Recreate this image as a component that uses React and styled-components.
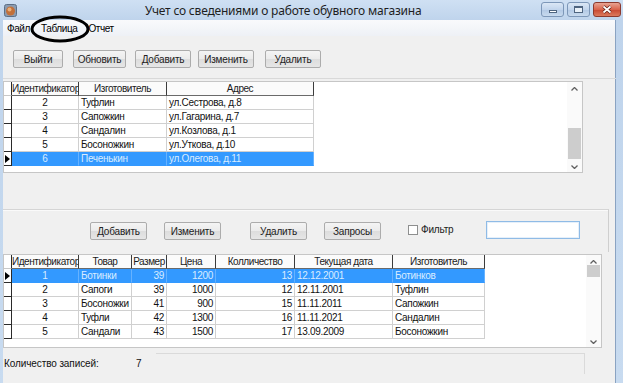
import React from 'react'
import styled, { createGlobalStyle } from 'styled-components'

const GlobalStyle = createGlobalStyle`
  html, body { margin: 0; padding: 0; background: #f0f0f0; }
  body { font-family: "Liberation Sans", Arial, sans-serif; }
  * { box-sizing: border-box; }
`

const suppliers = [
  { id: 2, name: 'Туфлин', addr: 'ул.Сестрова, д.8' },
  { id: 3, name: 'Сапожкин', addr: 'ул.Гагарина, д.7' },
  { id: 4, name: 'Сандалин', addr: 'ул.Козлова, д.1' },
  { id: 5, name: 'Босоножкин', addr: 'ул.Уткова, д.10' },
  { id: 6, name: 'Печенькин', addr: 'ул.Олегова, д.11' },
]

const goods = [
  [1, 'Ботинки', 39, 1200, 13, '12.12.2001', 'Ботинков'],
  [2, 'Сапоги', 39, 1000, 12, '12.11.2001', 'Туфлин'],
  [3, 'Босоножки', 41, 900, 15, '11.11.2011', 'Сапожкин'],
  [4, 'Туфли', 42, 1300, 16, '11.11.2021', 'Сандалин'],
  [5, 'Сандали', 43, 1500, 17, '13.09.2009', 'Босоножкин'],
]

const supplierCols = [
  { title: 'Идентификатор', width: 67, align: 'center' },
  { title: 'Изготовитель', width: 88, align: 'left' },
  { title: 'Адрес', width: 147, align: 'left' },
]

const goodsCols = [
  { title: 'Идентификатор', width: 67, align: 'center' },
  { title: 'Товар', width: 53, align: 'left' },
  { title: 'Размер', width: 35, align: 'right' },
  { title: 'Цена', width: 49, align: 'right' },
  { title: 'Колличество', width: 79, align: 'right' },
  { title: 'Текущая дата', width: 98, align: 'left' },
  { title: 'Изготовитель', width: 92, align: 'left' },
]

function DataGrid({ columns, rows, selected, width, height, thumbTop, thumbHeight }) {
  return (
    <GridBox $w={width} $h={height}>
      <Table>
        <Row>
          <Indicator $header />
          {columns.map((c) => (
            <HeadCell key={c.title} $w={c.width}>{c.title}</HeadCell>
          ))}
        </Row>
        {rows.map((r, i) => (
          <Row key={i}>
            <Indicator>{i === selected && <Arrow />}</Indicator>
            {columns.map((c, j) => (
              <Cell key={j} $w={c.width} $align={c.align} $sel={i === selected}>
                {r[j]}
              </Cell>
            ))}
          </Row>
        ))}
      </Table>
      <ScrollBar>
        <Chevron viewBox="0 0 7 4"><path d="M0.5 3.5 L3.5 0.5 L6.5 3.5" /></Chevron>
        <Track>
          <Thumb style={{ marginTop: thumbTop, height: thumbHeight }} />
        </Track>
        <Chevron viewBox="0 0 7 4"><path d="M0.5 0.5 L3.5 3.5 L6.5 0.5" /></Chevron>
      </ScrollBar>
    </GridBox>
  )
}

export default function App() {
  return (
    <>
      <GlobalStyle />
      <Window>
        <TitleBar>
          <AppIcon viewBox="0 0 13 13">
            <rect x="0.5" y="0.5" width="12" height="12" rx="2" fill="#8a9bb0" stroke="#5c6f86" />
            <circle cx="6.5" cy="7" r="4.5" fill="#c2703a" />
            <circle cx="5.5" cy="5.5" r="2" fill="#e8b07a" />
          </AppIcon>
          <Title>Учет со сведениями о работе обувного магазина</Title>
          <Caption>
            <CapButton $w={23}><MinGlyph /></CapButton>
            <CapButton $w={23}><MaxGlyph /></CapButton>
            <CloseButton>
              <svg width="10" height="9" viewBox="0 0 10 9">
                <path d="M1.5 1.5 L8.5 7.5 M8.5 1.5 L1.5 7.5" stroke="#5a1a10" strokeWidth="3.2" />
                <path d="M1.5 1.5 L8.5 7.5 M8.5 1.5 L1.5 7.5" stroke="#fff" strokeWidth="1.8" />
              </svg>
            </CloseButton>
          </Caption>
        </TitleBar>

        <Frame>
          <Content>
            <MenuBar>
              <MenuItem>Файл</MenuItem>
              <MenuItem>Таблица</MenuItem>
              <MenuItem>Отчет</MenuItem>
            </MenuBar>

            <Toolbar>
              <Button $w={50}>Выйти</Button>
              <Button $w={53} $ml={10}>Обновить</Button>
              <Button $w={56} $ml={9}>Добавить</Button>
              <Button $w={56} $ml={7}>Изменить</Button>
              <Button $w={56} $ml={11}>Удалить</Button>
            </Toolbar>

            <DataGrid
              columns={supplierCols}
              rows={suppliers.map((s) => [s.id, s.name, s.addr])}
              selected={4}
              width={580}
              height={92}
              thumbTop={37}
              thumbHeight={31}
            />

            <Spacer $h={36} />

            <ActionPanel>
              <Button $w={57}>Добавить</Button>
              <Button $w={57} $ml={17}>Изменить</Button>
              <Button $w={57} $ml={29}>Удалить</Button>
              <Button $w={57} $ml={17}>Запросы</Button>
              <CheckLabel>
                <CheckBox />
                Фильтр
              </CheckLabel>
              <FilterInput />
            </ActionPanel>

            <DataGrid
              columns={goodsCols}
              rows={goods}
              selected={0}
              width={599}
              height={94}
              thumbTop={1}
              thumbHeight={12}
            />

            <StatusBar>
              <StatusLabel>Количество записей:</StatusLabel>
              <StatusValue>7</StatusValue>
              <StatusPanel />
            </StatusBar>
          </Content>
        </Frame>

        <Annotation viewBox="0 0 60 28">
          <ellipse cx="30" cy="14" rx="28" ry="12" fill="none" stroke="#000" strokeWidth="3" />
        </Annotation>
      </Window>
    </>
  )
}

const Window = styled.div`
  position: relative;
  width: 623px;
  height: 383px;
  overflow: hidden;
  display: flex;
  flex-direction: column;
  background: linear-gradient(#cfe0f3, #bfd4ec 20px, #c8dbf0);
`

const TitleBar = styled.div`
  height: 20px;
  flex: none;
  display: flex;
  align-items: center;
  padding-left: 4px;
`

const AppIcon = styled.svg`
  width: 13px;
  height: 13px;
  flex: none;
`

const Title = styled.div`
  margin-left: 128px;
  font-family: "Noto Sans", "Open Sans", sans-serif;
  font-size: 12px;
  letter-spacing: -0.2px;
  color: #1e1e1e;
  white-space: nowrap;
  flex: 1;
`

const Caption = styled.div`
  display: flex;
  align-self: flex-start;
  margin-top: 2px;
  margin-right: 2px;
  gap: 3px;
`

const CapButton = styled.div`
  width: ${(p) => p.$w}px;
  height: 15px;
  border: 1px solid #7d97b8;
  border-radius: 3px;
  background: linear-gradient(#dbe7f5, #c2d5ec 50%, #b1c8e4 51%, #c8daee);
  display: flex;
  align-items: center;
  justify-content: center;
`

const MinGlyph = styled.div`
  width: 8px;
  height: 3px;
  margin-top: 3px;
  background: #fff;
  border: 1px solid #4f6580;
`

const MaxGlyph = styled.div`
  width: 9px;
  height: 7px;
  border: 1px solid #4f6580;
  border-top-width: 2px;
  background: #e8f0f8;
`

const CloseButton = styled(CapButton).attrs({ $w: 28 })`
  border-color: #8c3a2e;
  background: linear-gradient(#e8a493, #d9644c 50%, #c74731 51%, #dc7a5d);
`

const Frame = styled.div`
  flex: 1;
  display: flex;
  padding-left: 3px;
  padding-right: 7px;
`

const Content = styled.div`
  flex: 1;
  display: flex;
  flex-direction: column;
  background: #f0f0f0;
  border-right: 1px solid #8aa3c2;
`

const MenuBar = styled.div`
  height: 16px;
  display: flex;
  align-items: center;
  gap: 11px;
  padding-left: 4px;
  background: linear-gradient(#f9fafc, #eef1f6);
  font-size: 10px;
  color: #000;
`

const MenuItem = styled.span`
  letter-spacing: -0.4px;
`

const Toolbar = styled.div`
  height: 43px;
  display: flex;
  align-items: flex-start;
  padding: 14px 0 0 10px;
  border-bottom: 1px solid #d9d9d9;
  margin-right: -1px;
`

const Button = styled.div`
  width: ${(p) => p.$w}px;
  height: 18px;
  margin-left: ${(p) => p.$ml || 0}px;
  display: flex;
  align-items: center;
  justify-content: center;
  border: 1px solid #acacac;
  border-radius: 2px;
  background: linear-gradient(#f4f4f4, #ebebeb 50%, #dddddd 51%, #e6e6e6);
  font-size: 10px;
  color: #222;
  letter-spacing: -0.2px;
  flex: none;
`

const GridBox = styled.div`
  width: ${(p) => p.$w}px;
  height: ${(p) => p.$h}px;
  margin-top: 2px;
  flex: none;
  display: flex;
  background: #fff;
  border: 1px solid #c6c6c6;
  overflow: hidden;
`

const Table = styled.div`
  flex: 1;
  display: flex;
  flex-direction: column;
`

const Row = styled.div`
  display: flex;
  height: 14px;
  flex: none;
`

const Indicator = styled.div`
  width: 8px;
  flex: none;
  display: flex;
  align-items: center;
  border-right: 1px solid #2a2a2a;
  border-bottom: 1px solid ${(p) => (p.$header ? '#c8c8c8' : '#2a2a2a')};
  background: #fff;
`

const Arrow = styled.div`
  width: 0;
  height: 0;
  margin-left: 1px;
  border-top: 4px solid transparent;
  border-bottom: 4px solid transparent;
  border-left: 5px solid #000;
`

const HeadCell = styled.div`
  width: ${(p) => p.$w}px;
  flex: none;
  text-align: center;
  font-size: 10px;
  line-height: 13px;
  color: #1a1a1a;
  letter-spacing: -0.45px;
  white-space: nowrap;
  overflow: hidden;
  border-right: 1px solid #3c3c3c;
  border-bottom: 1px solid #6a6a6a;
  background: #fbfbfb;
`

const Cell = styled.div`
  width: ${(p) => p.$w}px;
  flex: none;
  text-align: ${(p) => p.$align};
  padding: 0 2px;
  font-size: 10px;
  line-height: 13px;
  letter-spacing: -0.3px;
  white-space: nowrap;
  overflow: hidden;
  color: ${(p) => (p.$sel ? '#d8ecff' : '#111')};
  background: ${(p) => (p.$sel ? '#3399ff' : '#fff')};
  border-right: 1px solid ${(p) => (p.$sel ? '#66b2ff' : '#d0d0d0')};
  border-bottom: 1px solid ${(p) => (p.$sel ? '#3399ff' : '#d0d0d0')};
`

const ScrollBar = styled.div`
  width: 15px;
  flex: none;
  display: flex;
  flex-direction: column;
  align-items: center;
  padding: 5px 0 3px;
  background: #fafafa;
`

const Chevron = styled.svg`
  width: 7px;
  height: 4px;
  flex: none;
  fill: none;
  stroke: #606060;
  stroke-width: 1.3;
`

const Track = styled.div`
  flex: 1;
  width: 100%;
  padding: 0 1px;
`

const Thumb = styled.div`
  width: 100%;
  background: #cdcdcd;
`

const Spacer = styled.div`
  height: ${(p) => p.$h}px;
  flex: none;
`

const ActionPanel = styled.div`
  width: 606px;
  height: 43px;
  flex: none;
  display: flex;
  align-items: flex-start;
  padding: 12px 0 0 87px;
  border-top: 1px solid #d5d5d5;
  border-right: 1px solid #cfcfcf;
  box-shadow: inset 0 1px 0 #fafafa;
`

const CheckLabel = styled.label`
  display: flex;
  align-items: center;
  gap: 3px;
  margin-left: 27px;
  margin-top: 2px;
  font-size: 10px;
  color: #222;
  letter-spacing: -0.2px;
`

const CheckBox = styled.span`
  width: 10px;
  height: 10px;
  background: #fff;
  border: 1px solid #8e8f8f;
`

const FilterInput = styled.div`
  width: 94px;
  height: 18px;
  margin-left: 33px;
  margin-top: -1px;
  background: #fff;
  border: 1px solid #8fbbe6;
  box-shadow: inset 0 0 0 1px #e6f0fa;
`

const StatusBar = styled.div`
  flex: 1;
  display: flex;
  align-items: flex-start;
  padding: 5px 0 0 1px;
  font-size: 10px;
  color: #111;
`

const StatusLabel = styled.span`
  margin-top: 5px;
  width: 132px;
  letter-spacing: -0.1px;
`

const StatusValue = styled.span`
  margin-top: 5px;
  width: 20px;
`

const StatusPanel = styled.div`
  width: 429px;
  height: 21px;
  border-top: 1px solid #dadada;
  border-right: 1px solid #dadada;
`

const Annotation = styled.svg`
  position: absolute;
  left: 30px;
  top: 15px;
  width: 60px;
  height: 28px;
`
